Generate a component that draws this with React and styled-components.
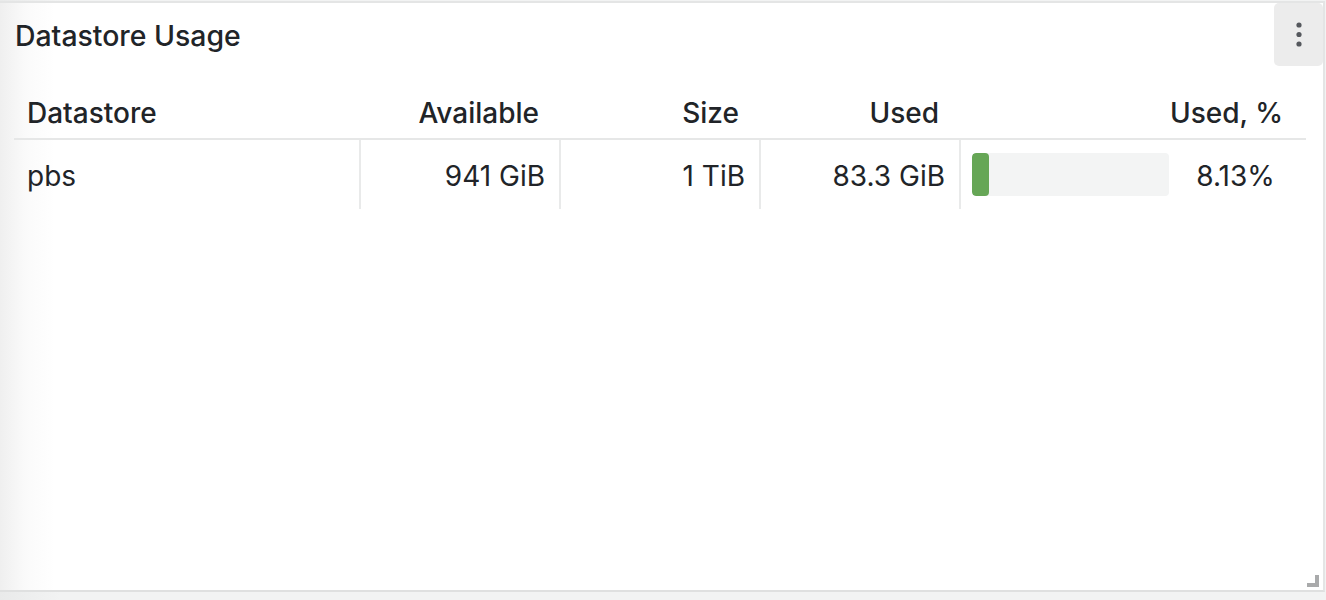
import React from 'react';
import styled, { createGlobalStyle } from 'styled-components';

const GlobalStyle = createGlobalStyle`
    html, body {
        margin: 0;
        padding: 0;
        background: linear-gradient(to right, #e9eaea 0, #f2f3f3 60px);
        font-family: Inter, "Noto Sans", sans-serif;
        color: #212428;
    }
`;

const Panel = styled.div`
    position: relative;
    box-sizing: border-box;
    width: 1325px;
    height: 591px;
    margin-top: 1px;
    border-top: 2px solid #e4e5e5;
    border-right: 2px solid #e4e5e5;
    border-bottom: 2px solid #dfe0e0;
    background: linear-gradient(to right, #efefef 0, #fafafa 25px, #ffffff 55px);
    display: flex;
    flex-direction: column;
`;

const PanelHeader = styled.div`
    height: 63px;
    display: flex;
    justify-content: space-between;
    align-items: center;
    padding-left: 15px;
`;

const Title = styled.h2`
    margin: 0;
    font-size: 28.4px;
    font-weight: 500;
    line-height: 1;
    position: relative;
    top: 2px;
`;

const MenuButton = styled.button`
    align-self: flex-start;
    width: 49px;
    height: 63px;
    border: none;
    border-radius: 5px;
    background: #ececec;
    display: flex;
    align-items: center;
    justify-content: center;
    padding: 0;
    cursor: pointer;
`;

const Grid = styled.div`
    margin: 0 17px 0 14px;
    display: grid;
    grid-template-columns: 345px 200px 200px 200px 1fr;
`;

const HeadCell = styled.div`
    height: 74px;
    box-sizing: border-box;
    display: flex;
    align-items: flex-end;
    justify-content: ${p => (p.$left ? 'flex-start' : 'flex-end')};
    padding: 0 ${p => p.$pr || 20}px 9px ${p => (p.$left ? 13 : 0)}px;
    border-bottom: 2px solid #e6e7e7;
    font-size: 28px;
    font-weight: 500;
    line-height: 32px;
`;

const Cell = styled.div`
    height: 69px;
    box-sizing: border-box;
    display: flex;
    align-items: center;
    justify-content: ${p => (p.$left ? 'flex-start' : 'flex-end')};
    padding: 3px 14px 0 ${p => (p.$left ? 13 : 0)}px;
    border-left: ${p => (p.$first ? 'none' : '2px solid #e9eaea')};
    font-size: 28px;
    font-weight: 400;
    line-height: 32px;
`;

const PercentCell = styled(Cell)`
    justify-content: flex-start;
    padding: 0 0 0 11px;
`;

const Bar = styled.div`
    width: 197px;
    height: 43px;
    border-radius: 4px;
    background: #f3f4f4;
    overflow: hidden;
`;

const Fill = styled.div`
    height: 100%;
    border-radius: 4px;
    background: #66a656;
`;

const PercentText = styled.span`
    flex: 1;
    text-align: center;
    padding: 3px 4px 0 0;
`;

const ResizeHandle = styled.svg`
    position: absolute;
    right: 4px;
    bottom: 3px;
`;

const rows = [
    { name: 'pbs', available: '941 GiB', size: '1 TiB', used: '83.3 GiB', percent: 8.13 },
];

const App = () => (
    <>
        <GlobalStyle />
        <Panel>
            <PanelHeader>
                <Title>Datastore Usage</Title>
                <MenuButton aria-label='Menu'>
                    <svg width='6' height='26' viewBox='0 0 6 26'>
                        <circle cx='3' cy='3' r='2.6' fill='#55585d' />
                        <circle cx='3' cy='12.5' r='2.6' fill='#55585d' />
                        <circle cx='3' cy='22' r='2.6' fill='#55585d' />
                    </svg>
                </MenuButton>
            </PanelHeader>
            <Grid>
                <HeadCell $left>Datastore</HeadCell>
                <HeadCell>Available</HeadCell>
                <HeadCell>Size</HeadCell>
                <HeadCell>Used</HeadCell>
                <HeadCell $pr={23}>Used, %</HeadCell>
                {rows.map(r => (
                    <React.Fragment key={r.name}>
                        <Cell $left $first>{r.name}</Cell>
                        <Cell>{r.available}</Cell>
                        <Cell>{r.size}</Cell>
                        <Cell>{r.used}</Cell>
                        <PercentCell>
                            <Bar>
                                <Fill style={{ width: `${Math.max(r.percent, 8.6)}%` }} />
                            </Bar>
                            <PercentText>{r.percent.toFixed(2)}%</PercentText>
                        </PercentCell>
                    </React.Fragment>
                ))}
            </Grid>
            <ResizeHandle width='12' height='12' viewBox='0 0 12 12'>
                <path d='M8 0h4v12H0V8h8z' fill='#a9aaab' />
            </ResizeHandle>
        </Panel>
    </>
);

export default App;
